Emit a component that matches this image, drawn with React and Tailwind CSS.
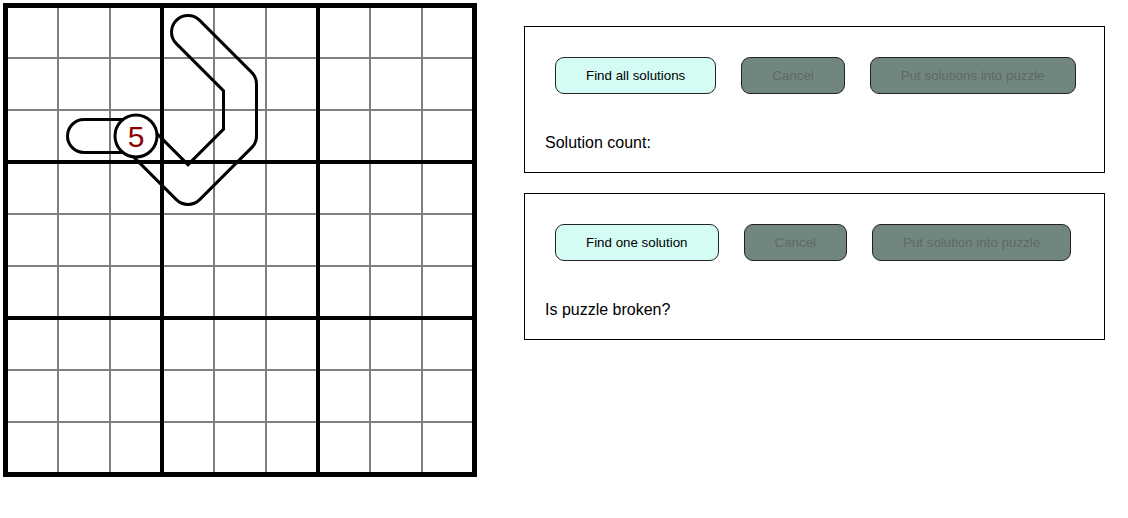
import React from "react";

// sudoku grid drawing
const CELL = 52;
const OFF = 6;

function Grid() {
  const thin = [];
  const thick = [];
  for (let k = 1; k < 9; k++) {
    const p = OFF + CELL * k;
    const list = k % 3 === 0 ? thick : thin;
    list.push(
      <line key={`v${k}`} x1={p} y1={OFF} x2={p} y2={OFF + CELL * 9} />,
      <line key={`h${k}`} x1={OFF} y1={p} x2={OFF + CELL * 9} y2={p} />
    );
  }

  const arrowPath = "M136 136 L188 188 L240 136 L240 84 L188 32";
  const pillPath = "M84 136 L136 136";

  return (
    <svg width="480" height="480" viewBox="0 0 480 480" className="block shrink-0">
      <defs>
        <mask id="outline" maskUnits="userSpaceOnUse" x="0" y="0" width="480" height="480">
          <rect x="0" y="0" width="480" height="480" fill="black" />
          <path d={arrowPath} stroke="white" strokeWidth="36" fill="none" strokeLinejoin="round" strokeLinecap="round" />
          <path d={arrowPath} stroke="black" strokeWidth="30" fill="none" strokeLinejoin="round" strokeLinecap="round" />
          <path d={pillPath} stroke="white" strokeWidth="36" fill="none" strokeLinecap="round" />
          <path d={pillPath} stroke="black" strokeWidth="30" fill="none" strokeLinecap="round" />
        </mask>
      </defs>
      <rect x="0" y="0" width="480" height="480" fill="white" />
      <g stroke="#808080" strokeWidth="2">{thin}</g>
      <g stroke="black" strokeWidth="4">{thick}</g>
      <rect x="5.5" y="5.5" width="469" height="469" fill="none" stroke="black" strokeWidth="5" />
      <rect x="0" y="0" width="480" height="480" fill="black" mask="url(#outline)" />
      <circle cx="136" cy="136" r="21" fill="white" stroke="black" strokeWidth="3" />
      <text
        x="136"
        y="147"
        textAnchor="middle"
        fontSize="30"
        fill="#8b0000"
        fontFamily="'Liberation Sans', Arial, sans-serif"
      >
        5
      </text>
    </svg>
  );
}

function Btn({ children, disabled }) {
  return (
    <button
      className={
        disabled
          ? "h-[37px] px-[30px] rounded-[9px] border border-[#222] bg-[#71867e] text-[13.33px] text-[#5c6a64]"
          : "h-[37px] px-[30px] rounded-[9px] border border-[#222] bg-[#d4fcf4] text-[13.33px] text-black"
      }
    >
      {children}
    </button>
  );
}

function Panel({ buttons, label }) {
  return (
    <div className="border border-black h-[147px] pt-[30px] pl-[30px]">
      <div className="flex gap-[25px]">
        {buttons.map((b) => (
          <Btn key={b.text} disabled={b.disabled}>
            {b.text}
          </Btn>
        ))}
      </div>
      <div className="mt-[40px] -ml-[10px] text-[16px] leading-[18px] text-black">{label}</div>
    </div>
  );
}

export default function App() {
  return (
    <div className="w-[1128px] h-[518px] bg-white flex font-['Liberation_Sans',Arial,sans-serif]">
      <Grid />
      <div className="ml-[44px] mt-[26px] w-[581px] flex flex-col gap-[20px]">
        <Panel
          buttons={[
            { text: "Find all solutions" },
            { text: "Cancel", disabled: true },
            { text: "Put solutions into puzzle", disabled: true },
          ]}
          label="Solution count:"
        />
        <Panel
          buttons={[
            { text: "Find one solution" },
            { text: "Cancel", disabled: true },
            { text: "Put solution into puzzle", disabled: true },
          ]}
          label="Is puzzle broken?"
        />
      </div>
    </div>
  );
}
